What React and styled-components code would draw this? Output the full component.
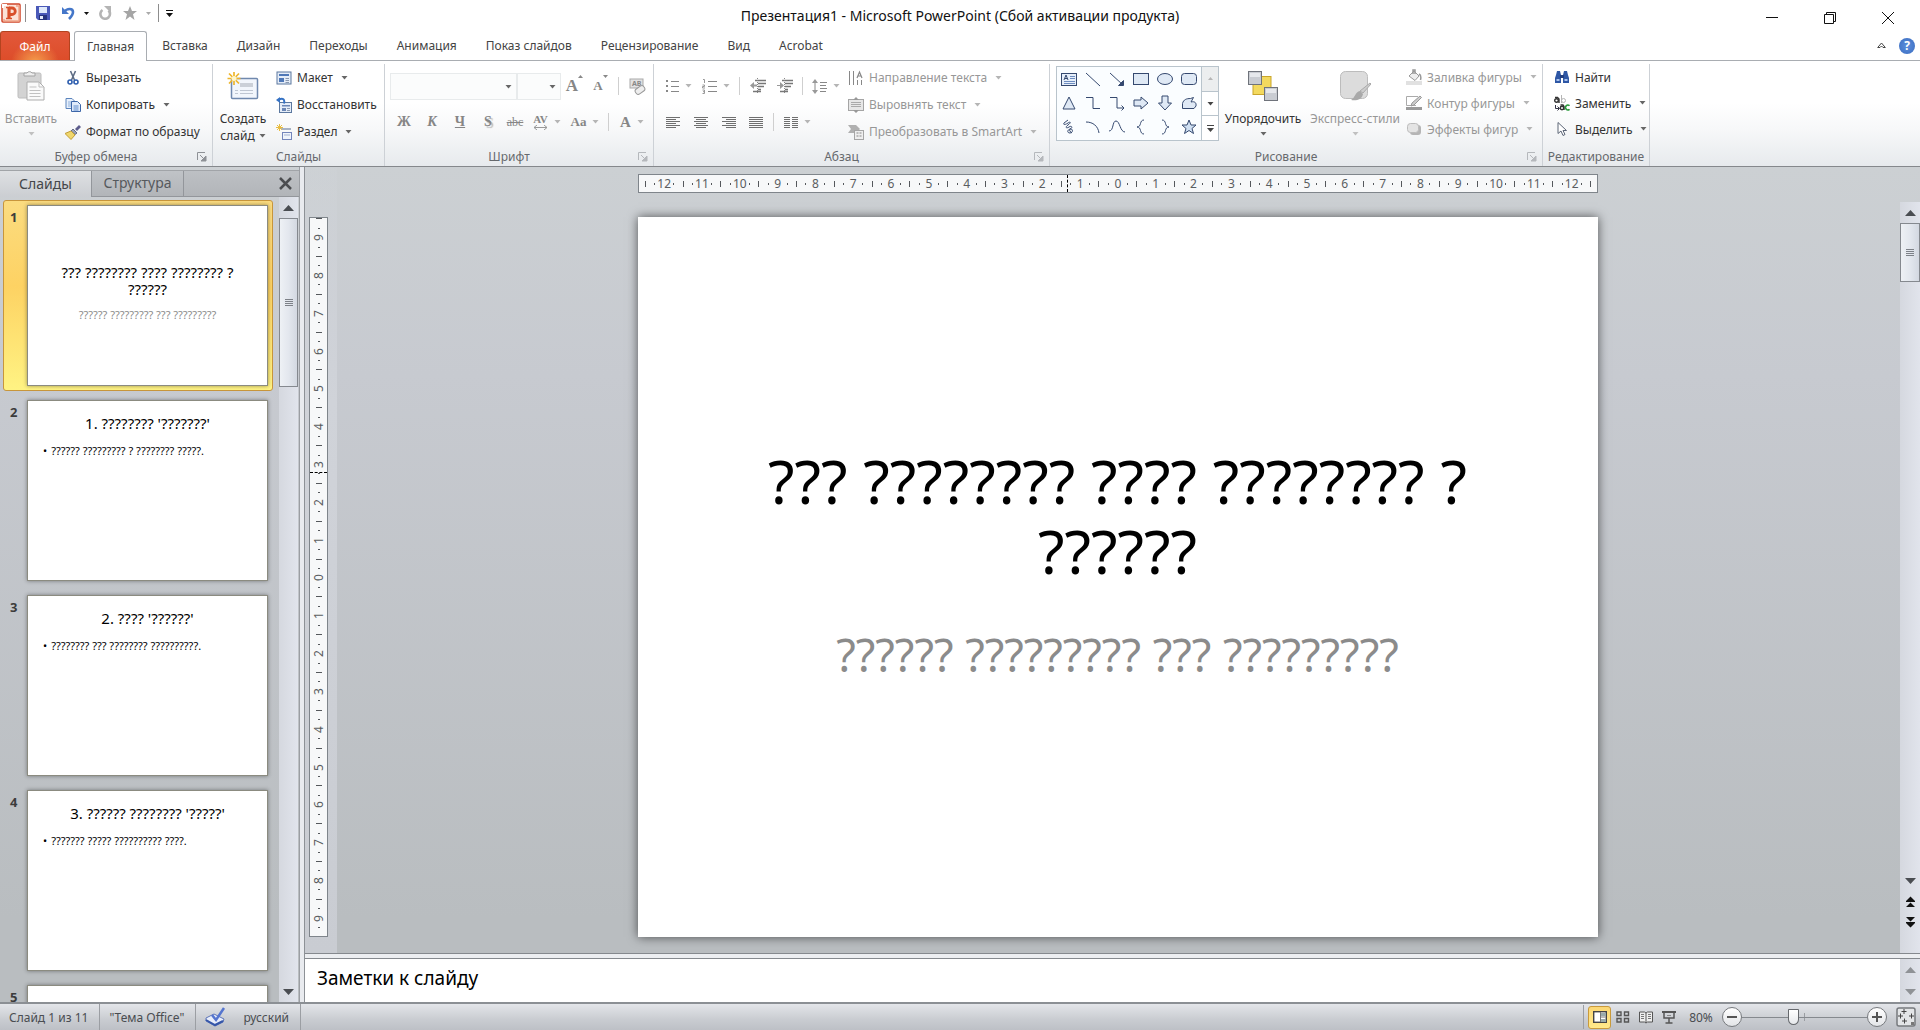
import { useState } from "react";
import styled, { createGlobalStyle, css } from "styled-components";

const GlobalStyle = createGlobalStyle`
  * {
    box-sizing: border-box;
  }
  body {
    margin: 0;
    overflow: hidden;
    font-family: "Noto Sans", "Liberation Sans", sans-serif;
    font-size: 12px;
    color: #333;
    background: #fff;
  }
  button, input, select, textarea {
    font: inherit;
    color: inherit;
  }
  button {
    border: 0;
    padding: 0;
    background: none;
    cursor: pointer;
  }
  button:disabled {
    color: #979797;
    cursor: default;
  }
  svg {
    display: block;
    flex: none;
  }
`;

const Svg = ({ w = 16, h = w, box, children }) => (
  <svg
    width={w}
    height={h}
    viewBox={box || `0 0 ${w} ${h}`}
    fill="none"
    aria-hidden="true"
  >
    {children}
  </svg>
);

const Caret = ({ color = "#666" }) => (
  <Svg w={7} h={4}>
    <path d="M.5 0h6L3.500 3.500z" fill={color} />
  </Svg>
);

const ArrowUp = ({ color = "#4a4d52" }) => (
  <Svg w={11} h={6}>
    <path d="M0 6h11L5.500 0z" fill={color} />
  </Svg>
);

const ArrowDown = ({ color = "#4a4d52" }) => (
  <Svg w={11} h={6}>
    <path d="M0 0h11L5.500 6z" fill={color} />
  </Svg>
);

/* ---------- icons ---------- */

const LogoIcon = () => (
  <Svg w={20}>
    <rect x="1" y="1" width="18" height="18" rx="1" fill="#fbe3d8" stroke="#d0452a" strokeWidth="1.500" />
    <path d="M2 5V2h4" stroke="#fff" strokeWidth="2" />
    <path d="M15 3h3v15H3v-2" stroke="#f0a488" strokeWidth="1.500" />
    <path d="M8 5h3a3 3 0 0 1 0 6.500H9" stroke="#d8502b" strokeWidth="2.800" />
    <path d="M8 4v12" stroke="#d8502b" strokeWidth="3.200" />
    <path d="M5 4.500h4M5 15.500h6" stroke="#d8502b" strokeWidth="1.500" />
  </Svg>
);

const SaveIcon = () => (
  <Svg w={14}>
    <path d="M0 0h14v14H2l-2-2z" fill="#4a59b8" />
    <rect x="3" y="1" width="8" height="6" fill="#dfe9fa" />
    <rect x="3" y="9" width="8" height="5" fill="#26337c" />
    <rect x="4" y="10" width="3" height="3" fill="#e6ebfa" />
  </Svg>
);

const UndoIcon = () => (
  <Svg w={14}>
    <path d="M3 6c3-4 9-4 9 0 0 3-2 5-4 7" stroke="#4577c9" strokeWidth="2.600" />
    <path d="M1 1v7h7z" fill="#4577c9" />
  </Svg>
);

const RedoIcon = () => (
  <Svg w={14}>
    <path d="M4.500 4a4.800 4.800 0 1 0 6 .5" stroke="#b4b4b4" strokeWidth="2.600" />
    <path d="M6 0h7v7z" fill="#b4b4b4" />
  </Svg>
);

const StarIcon = () => (
  <Svg w={14}>
    <path d="M7 0l2 5h5l-4 3.300L11.500 14 7 10.500 2.500 14 4 8.300 0 5h5z" fill="#a5a5a5" />
  </Svg>
);

const PasteIcon = () => (
  <Svg w={28} h={31}>
    <rect x="1" y="3" width="23" height="25" rx="1.500" fill="#d3d3d3" stroke="#bdbdbd" />
    <path d="M7 6V3h3a3 3 0 0 1 5 0h3v3z" fill="#eee" stroke="#a3a3a3" />
    <path d="M10 12h12l5 5v13H10z" fill="#fafafa" stroke="#adadad" />
    <path d="M22 12v5h5M12.500 17h7M12.500 20.500h11M12.500 23.500h11M12.500 26.500h11" stroke="#c1c1c1" />
  </Svg>
);

const CutIcon = () => (
  <Svg>
    <path d="M5.500 1l4 9M10.500 1l-4 9" stroke="#5d6c84" strokeWidth="1.600" />
    <circle cx="5" cy="12" r="2" stroke="#2f5faf" strokeWidth="1.600" />
    <circle cx="11" cy="12" r="2" stroke="#2f5faf" strokeWidth="1.600" />
  </Svg>
);

const CopyIcon = () => (
  <Svg>
    <path d="M1 1.500h6l3 3v7H1z" fill="#e8f0fb" stroke="#5b84bd" />
    <path d="M3 5h4M3 7h4M3 9h4" stroke="#8eb0dc" />
    <path d="M6.500 4.500h6l3 3v7h-9z" fill="#dfeafa" stroke="#3c66a8" />
    <path d="M8.500 9h5M8.500 11h5M8.500 13h5" stroke="#5c8acb" />
  </Svg>
);

const BrushIcon = () => (
  <Svg>
    <path d="M10 5l4-4 2 2-4 4z" fill="#5c5c8c" />
    <path d="M8 5l4 4-2 1.500L6 7z" fill="#9ba3b5" stroke="#666d84" />
    <path d="M6 7l4 4-4 4.500L0 9.500z" fill="#f0d76c" stroke="#c09c35" />
  </Svg>
);

const NewSlideIcon = () => (
  <Svg w={32} h={31}>
    <rect x="4.500" y="8.500" width="26" height="20" rx="1" fill="#f2f6fc" stroke="#7089ae" strokeWidth="1.500" />
    <path d="M13 13h13v4H13z" fill="#cbd0d8" />
    <path d="M8 20.500h3M13 20.500h13M8 23.500h3M13 23.500h13" stroke="#bfc6d2" />
    <path d="M7 2v13M.5 8.500h13M2 3.500l10 10M12 3.500l-10 10" stroke="#eeb62c" strokeWidth="1.700" />
    <circle cx="7" cy="8.500" r="2.500" fill="#fff6c9" />
  </Svg>
);

const LayoutIcon = () => (
  <Svg>
    <rect x="1" y="2" width="14" height="12" fill="#e5edf8" stroke="#5c789f" />
    <path d="M3 4h10v2H3zM3 8h5v4H3z" fill="#5079b8" />
    <path d="M9.500 8.500H13M9.500 10.500H13M9.500 12.500H13" stroke="#8a99b0" />
  </Svg>
);

const ResetIcon = () => (
  <Svg>
    <rect x="3.500" y="5.500" width="12" height="10" fill="#e5edf8" stroke="#5c789f" />
    <path d="M6 8h8v1.500H6zM6 11h4v3H6z" fill="#6b86b5" />
    <path d="M11 11.500h3M11 13.500h3" stroke="#8a99b0" />
    <path d="M3 2.500c4-2 6 0 5 4" stroke="#3572c4" strokeWidth="2" />
    <path d="M0 3l4-3v6z" fill="#3572c4" />
  </Svg>
);

const SectionIcon = () => (
  <Svg>
    <path d="M5 4h10v2H5z" fill="#a8b3c4" />
    <rect x="6.500" y="8.500" width="9" height="7" fill="#eef3fb" stroke="#7385bb" />
    <path d="M8 11h6" stroke="#a3b1d0" />
    <path d="M3.500 0v7M0 3.500h7M1 1l5 5M6 1L1 6" stroke="#e9bc3f" />
  </Svg>
);

const EraserIcon = () => (
  <Svg w={17}>
    <rect x="1" y="1" width="13" height="9" fill="#e2e2e2" stroke="#a9a9a9" />
    <text x="3" y="8" fontSize="7" fontWeight="700" fill="#888">AB</text>
    <rect x="6" y="9" width="10" height="6" rx="2.500" transform="rotate(-35 11 12)" fill="#eee" stroke="#999" />
  </Svg>
);

const BulletsIcon = () => (
  <Svg w={14}>
    <path d="M1 2h2M1 7h2M1 12h2" stroke="#888" strokeWidth="2" />
    <path d="M6 2.500h8M6 7.500h8M6 12.500h8" stroke="#888" />
  </Svg>
);

const NumbersIcon = () => (
  <Svg w={15}>
    <path d="M1 .5h1.500V4M.5 6h2v1.500h-2V9H3M.5 11h2v3.500h-2M1 12.700h1" stroke="#999" />
    <path d="M6 2.500h9M6 7.500h9M6 12.500h9" stroke="#888" />
  </Svg>
);

const IndentIcon = ({ right }) => (
  <Svg w={16}>
    <path d="M5 2.500h11M8 5.500h8M8 8.500h6M8 11.500h3M3 13.500h8" stroke="#777" strokeWidth="1.500" />
    <path d={right ? "M0 7h3V4l4 3.500L3 11V8H0z" : "M0 7.500L4 4v2.500h3v2H4V11z"} fill="#999" />
    <path d="M7.500 0v16" stroke="#888" strokeDasharray="1 1" />
  </Svg>
);

const SpacingIcon = () => (
  <Svg w={15}>
    <path d="M3 2v11" stroke="#888" />
    <path d="M0 4l3-4 3 4zM0 11l3 4 3-4z" fill="#999" />
    <path d="M8 3.500h7M8 6.500h6M8 9.500h7M8 12.500h6" stroke="#888" />
  </Svg>
);

const alignPaths = {
  left: "M0 .5h14M0 2.500h10M0 4.500h14M0 6.500h10M0 8.500h14M0 10.500h10",
  center: "M0 .5h14M2 2.500h10M0 4.500h14M2 6.500h10M0 8.500h14M2 10.500h10",
  right: "M0 .5h14M4 2.500h10M0 4.500h14M4 6.500h10M0 8.500h14M4 10.500h10",
  justify: "M0 .5h14M0 2.500h14M0 4.500h14M0 6.500h14M0 8.500h14M0 10.500h14",
  columns:
    "M0 .5h6M0 2.500h6M0 4.500h6M0 6.500h6M0 8.500h6M0 10.500h6M8 .5h6M8 2.500h6M8 4.500h6M8 6.500h6M8 8.500h6M8 10.500h6",
};

const AlignIcon = ({ type }) => (
  <Svg w={14} h={11}>
    <path d={alignPaths[type]} stroke="#6f6f6f" />
  </Svg>
);

const DirectionIcon = () => (
  <Svg>
    <path d="M1.500 1v14M5.500 1v14M9.500 10v5M13.500 10v5" stroke="#888" />
    <path d="M9 8l2.500-6L14 8M10 6h3" stroke="#888" strokeWidth="1.200" />
  </Svg>
);

const AlignTextIcon = () => (
  <Svg>
    <rect x=".5" y="2.500" width="15" height="11" fill="#e7e7e7" stroke="#a5a5a5" />
    <path d="M3 5.500h10M3 7.500h10M3 9.500h10" stroke="#aaa" />
    <path d="M8 0l3 3H5zM8 16l3-3H5z" fill="#999" />
  </Svg>
);

const SmartArtIcon = () => (
  <Svg>
    <path d="M0 1h8l4 4-4 4H0l3-4z" fill="#b0b0b0" />
    <rect x="6.500" y="6.500" width="9" height="9" fill="#eee" stroke="#a5a5a5" />
    <path d="M8.500 9h2M11.500 9h2M8.500 12h2M11.500 12h2" stroke="#aaa" strokeWidth="1.500" />
  </Svg>
);

const ArrangeIcon = () => (
  <Svg w={32} h={31}>
    <rect x="6" y="6.500" width="18" height="18" fill="#f3d95e" stroke="#c9a52b" />
    <rect x="1.500" y="1.500" width="13" height="13" fill="#c9ccd2" stroke="#6f737b" />
    <path d="M3 3h10v4H3z" fill="#e6e8ec" />
    <rect x="17.500" y="17.500" width="13" height="13" fill="#c9ccd2" stroke="#6f737b" />
    <path d="M19 19h10v4H19z" fill="#e6e8ec" />
  </Svg>
);

const StylesIcon = () => (
  <Svg w={32} h={31}>
    <rect x="1.500" y="1.500" width="27" height="27" rx="5" fill="#dcdcdc" stroke="#bcbcbc" />
    <path d="M31 13l1 1-8 9-3-2z" fill="#ccc" stroke="#aaa" />
    <path d="M21 21l3 3c-1 6-7 7-12 6 4-2 4-8 9-9z" fill="#a9a9a9" />
  </Svg>
);

const FillIcon = () => (
  <Svg>
    <path d="M0 12h16v4H0z" fill="#e1e1e1" />
    <path d="M3 7l5-5 5 5-4 4.500z" fill="#eee" stroke="#999" />
    <path d="M7 5V1h2v4M13 5c2 1 2 4 1.500 6" stroke="#999" strokeWidth="1.500" />
  </Svg>
);

const OutlineIcon = () => (
  <Svg>
    <path d="M0 12h16v3H0z" fill="#9a9a9a" />
    <path d="M12 1.500H.5v9H10" stroke="#aaa" />
    <path d="M14 1l1.500 1.500L8 10l-3 1 1-3z" fill="#ccc" stroke="#999" />
  </Svg>
);

const EffectsIcon = () => (
  <Svg>
    <rect x="4" y="4" width="11" height="10" rx="3" fill="#b5b5b5" />
    <rect x="1.500" y="2.500" width="11" height="9" rx="3" fill="#e4e4e4" stroke="#bcbcbc" />
  </Svg>
);

const FindIcon = () => (
  <Svg>
    <path d="M2 6l1-4h3l1 4v8H1V9zM9 6l1-4h3l1 4 1 3v5H9z" fill="#2e57a5" />
    <path d="M6 6h4v3H6z" fill="#223f80" />
    <path d="M2.500 10h3v2h-3zM10.500 10h3v2h-3z" fill="#aac3ee" />
  </Svg>
);

const ReplaceIcon = () => (
  <Svg>
    <circle cx="2.500" cy="5.500" r="1.800" stroke="#333" strokeWidth="1.400" />
    <path d="M1 2.500h2.500L5 4v4" stroke="#333" strokeWidth="1.400" />
    <path d="M7.500 0v8" stroke="#b5b5b5" />
    <circle cx="9.500" cy="5.500" r="2" stroke="#b5b5b5" />
    <path d="M1.500 10v3.500H5M3.500 11.500l2 2-2 2" stroke="#334" />
    <circle cx="8" cy="13" r="1.700" stroke="#333" strokeWidth="1.400" />
    <path d="M6.500 10h2.500l1 1.500V15" stroke="#333" strokeWidth="1.400" />
    <path d="M15.500 10.700a2.400 2.400 0 1 0 0 3.600" stroke="#2a9a3a" strokeWidth="1.600" />
  </Svg>
);

const SelectIcon = () => (
  <Svg>
    <path d="M4 1.500v11l3-2.500 2 4.500 2-1-2-4h3.500z" fill="#fff" stroke="#5d6677" />
  </Svg>
);

const LauncherIcon = ({ color }) => (
  <Svg w={10}>
    <path d="M.5 8V.5H8" stroke={color} />
    <path d="M3 3l4 4M9 4v5H4z" stroke={color} fill={color} />
  </Svg>
);

const shapeIcons = [
  {
    name: "Надпись",
    draw: (
      <>
        <rect x=".5" y="2.500" width="15" height="12" fill="#e6effa" />
        <path d="M9 5.500h5M9 7.500h5M3 10.500h11M3 12.500h11" stroke="#6d8cc0" />
        <path d="M3 9l2-5 2 5M4 7.500h2.500" />
      </>
    ),
  },
  { name: "Линия", draw: <path d="M1 2l14 13" /> },
  { name: "Стрелка", draw: <path d="M1 2l13 12M14.500 9.500v5h-5z" fill="#35496f" /> },
  { name: "Прямоугольник", draw: <rect x=".5" y="2.500" width="15" height="11" fill="#dfe9f5" /> },
  { name: "Овал", draw: <ellipse cx="8" cy="8" rx="7.500" ry="5.500" fill="#dfe9f5" /> },
  {
    name: "Скругленный прямоугольник",
    draw: <rect x=".5" y="2.500" width="15" height="11" rx="3" fill="#dfe9f5" />,
  },
  { name: "Треугольник", draw: <path d="M8 2l6 12H2z" fill="#dfe9f5" /> },
  { name: "Соединитель", draw: <path d="M1 2.500h7v11h7" /> },
  { name: "Соединитель со стрелкой", draw: <path d="M1 2.500h7v10.500h7M12.500 10.500L15 13l-2.500 2.500" /> },
  { name: "Стрелка вправо", draw: <path d="M1 5h7V2l7 6-7 6v-3H1z" fill="#dfe9f5" /> },
  { name: "Стрелка вниз", draw: <path d="M5 1v7H1.500L8 15l6.500-7H11V1z" fill="#dfe9f5" /> },
  {
    name: "Полилиния",
    draw: <path d="M1.500 13.500v-5c1-4 4-5 8-5l3-1-2.500 4.500c4-1 5.500 1 5 4l-2 2.500z" fill="#dfe9f5" />,
  },
  { name: "Рисованная кривая", draw: <path d="M7 1L3 4c-1 2 1 2 4 0s3 0 0 2-2 4 1 2 4 1 1 2-3 4 0 4 3-4 1-4-2 2 1 4" /> },
  { name: "Дуга", draw: <path d="M1 3c7 0 12 4 13 11" /> },
  { name: "Кривая", draw: <path d="M0 12C5 12 3 2 7 2s4 11 9 11" /> },
  { name: "Левая скобка", draw: <path d="M11 1C6 1 9 8 4 8c5 0 2 7 7 7" /> },
  { name: "Правая скобка", draw: <path d="M5 1c5 0 2 7 7 7-5 0-2 7-7 7" /> },
  {
    name: "Звезда",
    draw: <path d="M8 1l2 5h5l-4 3.500 1.500 5L8 11.500l-4.500 3L5 9.500 1 6h5z" fill="#cfe0f3" />,
  },
];

/* ---------- ribbon ---------- */

const LabelButton = ({ icon, children, caret, disabled }) => (
  <SmallButton type="button" disabled={disabled}>
    {icon}
    <span>{children}</span>
    {caret && <Caret color={disabled ? "#b5b5b5" : "#666"} />}
  </SmallButton>
);

const ToolButton = ({ label, width, caret, children }) => (
  <Tool type="button" disabled aria-label={label} title={label} $width={width}>
    {children}
    {caret && <Caret color="#b5b5b5" />}
  </Tool>
);

const RibbonGroup = ({ title, width, launcher, children }) => (
  <Group $width={width}>
    <GroupBody>{children}</GroupBody>
    <GroupFooter>
      <GroupTitle>{title}</GroupTitle>
      {launcher && (
        <Launcher type="button" aria-label={title}>
          <LauncherIcon color={launcher} />
        </Launcher>
      )}
    </GroupFooter>
  </Group>
);

const Ribbon = () => (
  <RibbonBar>
    <RibbonGroup title="Буфер обмена" width={213} launcher="#8e9196">
      <BigButton type="button" disabled $width={62}>
        <PasteIcon />
        <span>Вставить</span>
        <Caret color="#c0c0c0" />
      </BigButton>
      <ButtonColumn>
        <LabelButton icon={<CutIcon />}>Вырезать</LabelButton>
        <LabelButton icon={<CopyIcon />} caret>
          Копировать
        </LabelButton>
        <LabelButton icon={<BrushIcon />}>Формат по образцу</LabelButton>
      </ButtonColumn>
    </RibbonGroup>

    <RibbonGroup title="Слайды" width={172}>
      <BigButton type="button" $width={60}>
        <NewSlideIcon />
        <span>Создать</span>
        <CaretLine>
          слайд <Caret />
        </CaretLine>
      </BigButton>
      <ButtonColumn>
        <LabelButton icon={<LayoutIcon />} caret>
          Макет
        </LabelButton>
        <LabelButton icon={<ResetIcon />}>Восстановить</LabelButton>
        <LabelButton icon={<SectionIcon />} caret>
          Раздел
        </LabelButton>
      </ButtonColumn>
    </RibbonGroup>

    <RibbonGroup title="Шрифт" width={269} launcher="#b5b8bc">
      <ToolRows>
        <ToolRow>
          <Combo $width={127}>
            <select aria-label="Шрифт" disabled />
            <Caret />
          </Combo>
          <Combo $width={44}>
            <select aria-label="Размер шрифта" disabled />
            <Caret />
          </Combo>
          <ToolButton label="Увеличить размер" width={27}>
            <Letter $size={17}>A</Letter>
            <Mark>
              <Svg w={5} h={3}>
                <path d="M0 3h5L2.500 0z" fill="#888" />
              </Svg>
            </Mark>
          </ToolButton>
          <ToolButton label="Уменьшить размер" width={25}>
            <Letter $size={13}>A</Letter>
            <Mark>
              <Svg w={5} h={3}>
                <path d="M0 0h5L2.500 3z" fill="#888" />
              </Svg>
            </Mark>
          </ToolButton>
          <Separator $width={11} />
          <ToolButton label="Очистить формат" width={26}>
            <EraserIcon />
          </ToolButton>
        </ToolRow>
        <ToolRow>
          <ToolButton label="Полужирный" width={28}>
            <Letter>Ж</Letter>
          </ToolButton>
          <ToolButton label="Курсив" width={28}>
            <Letter $kind="italic">К</Letter>
          </ToolButton>
          <ToolButton label="Подчеркнутый" width={28}>
            <Letter $kind="underline">Ч</Letter>
          </ToolButton>
          <ToolButton label="Тень" width={28}>
            <Letter $kind="shadow">S</Letter>
          </ToolButton>
          <ToolButton label="Зачеркнутый" width={26}>
            <Letter $kind="strike" $size={12}>
              abc
            </Letter>
          </ToolButton>
          <ToolButton label="Интервал" width={38} caret>
            <Kerning>
              <Letter $size={11}>AV</Letter>
              <Svg w={15} h={5}>
                <path d="M1 2.500h13M4 0L1 2.500 4 5M11 0l3 2.500L11 5" stroke="#999" />
              </Svg>
            </Kerning>
          </ToolButton>
          <ToolButton label="Регистр" width={38} caret>
            <Letter $size={13}>Aa</Letter>
          </ToolButton>
          <Separator $width={8} />
          <ToolButton label="Цвет текста" width={38} caret>
            <Letter $size={15}>A</Letter>
          </ToolButton>
        </ToolRow>
      </ToolRows>
    </RibbonGroup>

    <RibbonGroup title="Абзац" width={396} launcher="#b5b8bc">
      <ToolRows>
        <ToolRow>
          <ToolButton label="Маркеры" width={38} caret>
            <BulletsIcon />
          </ToolButton>
          <ToolButton label="Нумерация" width={38} caret>
            <NumbersIcon />
          </ToolButton>
          <Separator $width={8} />
          <ToolButton label="Уменьшить отступ" width={27}>
            <IndentIcon />
          </ToolButton>
          <ToolButton label="Увеличить отступ" width={27}>
            <IndentIcon right />
          </ToolButton>
          <Separator $width={8} />
          <ToolButton label="Междустрочный интервал" width={38} caret>
            <SpacingIcon />
          </ToolButton>
        </ToolRow>
        <ToolRow>
          <ToolButton label="По левому краю" width={28}>
            <AlignIcon type="left" />
          </ToolButton>
          <ToolButton label="По центру" width={28}>
            <AlignIcon type="center" />
          </ToolButton>
          <ToolButton label="По правому краю" width={28}>
            <AlignIcon type="right" />
          </ToolButton>
          <ToolButton label="По ширине" width={26}>
            <AlignIcon type="justify" />
          </ToolButton>
          <Separator $width={8} />
          <ToolButton label="Колонки" width={38} caret>
            <AlignIcon type="columns" />
          </ToolButton>
        </ToolRow>
      </ToolRows>
      <ButtonColumn>
        <LabelButton icon={<DirectionIcon />} caret disabled>
          Направление текста
        </LabelButton>
        <LabelButton icon={<AlignTextIcon />} caret disabled>
          Выровнять текст
        </LabelButton>
        <LabelButton icon={<SmartArtIcon />} caret disabled>
          Преобразовать в SmartArt
        </LabelButton>
      </ButtonColumn>
    </RibbonGroup>

    <RibbonGroup title="Рисование" width={493} launcher="#b5b8bc">
      <Gallery>
        <GalleryGrid>
          {shapeIcons.map((shape) => (
            <GalleryCell type="button" key={shape.name} aria-label={shape.name}>
              <Svg>
                <g stroke="#35496f">{shape.draw}</g>
              </Svg>
            </GalleryCell>
          ))}
        </GalleryGrid>
        <GalleryScroll>
          <button type="button" aria-label="Вверх" disabled>
            <Svg w={5} h={3}>
              <path d="M0 3h5L2.500 0z" fill="#b5b5b5" />
            </Svg>
          </button>
          <button type="button" aria-label="Вниз">
            <Caret color="#444" />
          </button>
          <button type="button" aria-label="Дополнительно">
            <Svg w={7} h={7}>
              <path d="M0 0h7v1H0zM0 3h7L3.500 7z" fill="#444" />
            </Svg>
          </button>
        </GalleryScroll>
      </Gallery>
      <BigButton type="button" $width={88}>
        <ArrangeIcon />
        <span>Упорядочить</span>
        <Caret />
      </BigButton>
      <BigButton type="button" disabled $width={96}>
        <StylesIcon />
        <span>Экспресс-стили</span>
        <Caret color="#c0c0c0" />
      </BigButton>
      <ButtonColumn $tight>
        <LabelButton icon={<FillIcon />} caret disabled>
          Заливка фигуры
        </LabelButton>
        <LabelButton icon={<OutlineIcon />} caret disabled>
          Контур фигуры
        </LabelButton>
        <LabelButton icon={<EffectsIcon />} caret disabled>
          Эффекты фигур
        </LabelButton>
      </ButtonColumn>
    </RibbonGroup>

    <RibbonGroup title="Редактирование" width={107}>
      <ButtonColumn $tight $inset>
        <LabelButton icon={<FindIcon />}>Найти</LabelButton>
        <LabelButton icon={<ReplaceIcon />} caret>
          Заменить
        </LabelButton>
        <LabelButton icon={<SelectIcon />} caret>
          Выделить
        </LabelButton>
      </ButtonColumn>
    </RibbonGroup>
  </RibbonBar>
);

/* ---------- slides ---------- */

const slides = [
  { title: "??? ???????? ???? ???????? ? ??????", subtitle: "?????? ????????? ??? ?????????" },
  { title: "1. ???????? '???????'", text: "?????? ????????? ? ???????? ?????." },
  { title: "2. ???? '??????'", text: "???????? ??? ???????? ??????????." },
  { title: "3. ?????? ???????? '?????'", text: "??????? ????? ?????????? ????." },
  { title: "", text: "" },
];

const SlidePanel = () => {
  const [selected, setSelected] = useState(0);

  return (
    <Panel>
      <PanelTabs>
        <PanelTab type="button" $active>
          Слайды
        </PanelTab>
        <PanelTab type="button">Структура</PanelTab>
        <PanelClose type="button" aria-label="Закрыть">
          <Svg w={13}>
            <path d="M1 1l11 11M12 1L1 12" stroke="#4b4d50" strokeWidth="2.500" />
          </Svg>
        </PanelClose>
      </PanelTabs>
      <PanelBody>
        <Thumbs>
          {slides.map((slide, index) => (
            <ThumbItem
              type="button"
              key={index}
              $selected={index === selected}
              onClick={() => setSelected(index)}
            >
              <ThumbNumber>{index + 1}</ThumbNumber>
              <Thumb $cover={Boolean(slide.subtitle)}>
                <strong>{slide.title}</strong>
                {slide.subtitle && <em>{slide.subtitle}</em>}
                {slide.text && (
                  <ThumbBullet>
                    <i>•</i>
                    {slide.text}
                  </ThumbBullet>
                )}
              </Thumb>
            </ThumbItem>
          ))}
        </Thumbs>
        <ScrollBar $width={19}>
          <ScrollButton type="button" aria-label="Вверх">
            <ArrowUp />
          </ScrollButton>
          <ScrollThumb $height={169}>
            <Grip />
          </ScrollThumb>
          <ScrollSpace />
          <ScrollButton type="button" aria-label="Вниз">
            <ArrowDown />
          </ScrollButton>
        </ScrollBar>
      </PanelBody>
    </Panel>
  );
};

const rulerMarks = (limit) => {
  const marks = [];
  for (let n = -limit; n <= limit; n++) {
    marks.push("tick", "dot", Math.abs(n), "dot");
  }
  marks.push("tick");
  return marks;
};

const Ruler = ({ vertical, limit }) => (
  <RulerBar $vertical={vertical}>
    <RulerScale $vertical={vertical}>
      {rulerMarks(limit).map((mark, index) => (
        <RulerCell key={index} $kind={mark} $vertical={vertical}>
          {typeof mark === "number" ? <b>{mark}</b> : <i />}
        </RulerCell>
      ))}
    </RulerScale>
    <RulerCursor $vertical={vertical} />
  </RulerBar>
);

const DoubleArrow = ({ down }) => (
  <Svg w={9} h={11}>
    <path
      d={down ? "M0 0h9L4.500 4.500zM0 6h9l-4.500 4.500zM0 5h9v1H0z" : "M0 5h9L4.500 .5zM0 11h9L4.500 6.500zM0 5h9v1H0z"}
      fill="#111"
    />
  </Svg>
);

const Editor = () => (
  <EditorArea>
    <Stage>
      <RulerColumn>
        <Ruler vertical limit={9} />
      </RulerColumn>
      <Canvas>
        <Ruler limit={12} />
        <Sheet>
          <h1>{slides[0].title}</h1>
          <p>{slides[0].subtitle}</p>
        </Sheet>
      </Canvas>
      <StageScroll>
        <ScrollBar $width={20}>
          <ScrollButton type="button" aria-label="Вверх">
            <ArrowUp />
          </ScrollButton>
          <ScrollThumb $height={59}>
            <Grip />
          </ScrollThumb>
          <ScrollSpace />
          <ScrollButton type="button" aria-label="Вниз">
            <ArrowDown />
          </ScrollButton>
          <ScrollButton type="button" aria-label="Предыдущий слайд">
            <DoubleArrow />
          </ScrollButton>
          <ScrollButton type="button" aria-label="Следующий слайд">
            <DoubleArrow down />
          </ScrollButton>
          <ScrollEnd />
        </ScrollBar>
      </StageScroll>
    </Stage>
    <Notes>
      <textarea aria-label="Заметки" defaultValue="Заметки к слайду" />
      <ScrollBar $width={20}>
        <ScrollButton type="button" aria-label="Вверх">
          <ArrowUp color="#8f9296" />
        </ScrollButton>
        <ScrollSpace />
        <ScrollButton type="button" aria-label="Вниз">
          <ArrowDown color="#8f9296" />
        </ScrollButton>
      </ScrollBar>
    </Notes>
  </EditorArea>
);

const StatusBar = () => {
  const [zoom, setZoom] = useState(40);

  return (
    <Status>
      <StatusItem>Слайд 1 из 11</StatusItem>
      <StatusItem>"Тема Office"</StatusItem>
      <StatusItem>
        <Svg w={21} h={20}>
          <path d="M1 11l8-4 10 5-1 3-8 4-9-5z" fill="#e9eefa" stroke="#5c74b8" />
          <path d="M1 13l9 5 8-4" stroke="#3556a8" strokeWidth="2" />
          <path d="M7 8l4 5L19 1" stroke="#5575cf" strokeWidth="2.500" />
        </Svg>
        <Language type="button">русский</Language>
      </StatusItem>
      <StatusSpace />
      <StatusDivider />
      <ViewButton type="button" aria-label="Обычный" $active>
        <Svg w={14} h={12}>
          <rect x=".7" y=".7" width="12.600" height="10.600" fill="#fff" stroke="#444" strokeWidth="1.400" />
          <path d="M7.500 1v10M7.500 6h5" stroke="#777" />
          <path d="M8 2h5v3H8zM8 8h5v3H8z" fill="#9aa" />
        </Svg>
      </ViewButton>
      <ViewButton type="button" aria-label="Сортировщик слайдов">
        <Svg w={14} h={12}>
          <path d="M1 1h4v3.500H1zM8.500 1h4v3.500h-4zM1 7.500h4V11H1zM8.500 7.500h4V11h-4z" stroke="#555" strokeWidth="1.400" />
        </Svg>
      </ViewButton>
      <ViewButton type="button" aria-label="Режим чтения">
        <Svg w={14} h={13}>
          <path d="M.5 1h5L7 2l1.500-1h5v10h-5L7 12l-1.500-1h-5zM7 2v10" stroke="#555" fill="#eee" />
          <path d="M2 3.500h3M2 5.500h3M2 7.500h3M9 3.500h3M9 5.500h3M9 7.500h3" stroke="#777" />
        </Svg>
      </ViewButton>
      <ViewButton type="button" aria-label="Показ слайдов">
        <Svg w={14} h={13}>
          <path d="M0 1h14" stroke="#555" strokeWidth="2" />
          <path d="M2 2v5h10V2M7 7v5M3.500 12h7" stroke="#555" strokeWidth="1.500" />
          <path d="M5 4.500h4" stroke="#888" />
        </Svg>
      </ViewButton>
      <ZoomValue>80%</ZoomValue>
      <RoundButton type="button" aria-label="Уменьшить">
        <Svg w={10}>
          <path d="M0 5h10" stroke="#555" strokeWidth="2" />
        </Svg>
      </RoundButton>
      <ZoomSlider
        type="range"
        aria-label="Масштаб"
        value={zoom}
        onChange={(e) => setZoom(e.target.value)}
      />
      <RoundButton type="button" aria-label="Увеличить">
        <Svg w={10}>
          <path d="M0 5h10M5 0v10" stroke="#555" strokeWidth="2" />
        </Svg>
      </RoundButton>
      <FitButton type="button" aria-label="По размеру окна">
        <Svg w={20}>
          <rect x="1" y="1" width="18" height="18" rx="2" fill="#e3e5e7" stroke="#777a7e" strokeWidth="1.500" />
          <path d="M8 2v5M5.500 4.500h5M13 9h5M15.500 6.500v5M2 9h5M4.500 6.500v5M6 14h5M8.500 11.500v5" stroke="#444" />
          <path d="M15 15h3v3h-3z" fill="#777" />
        </Svg>
      </FitButton>
    </Status>
  );
};

const tabs = [
  "Вставка",
  "Дизайн",
  "Переходы",
  "Анимация",
  "Показ слайдов",
  "Рецензирование",
  "Вид",
  "Acrobat",
];

const App = () => (
  <Window>
    <GlobalStyle />
    <TitleBar>
      <QuickAccess>
        <LogoIcon />
        <QuickDivider />
        <QuickButton type="button" aria-label="Сохранить" $width={25}>
          <SaveIcon />
        </QuickButton>
        <QuickButton type="button" aria-label="Отменить" $width={25}>
          <UndoIcon />
        </QuickButton>
        <QuickButton type="button" aria-label="Список отмены" $width={12}>
          <Svg w={5} h={3}>
            <path d="M0 0h5L2.500 3z" fill="#111" />
          </Svg>
        </QuickButton>
        <QuickButton type="button" aria-label="Повторить" disabled $width={25}>
          <RedoIcon />
        </QuickButton>
        <QuickButton type="button" aria-label="Анимация" disabled $width={25}>
          <StarIcon />
        </QuickButton>
        <QuickButton type="button" aria-label="Список анимации" disabled $width={12}>
          <Svg w={5} h={3}>
            <path d="M0 0h5L2.500 3z" fill="#aaa" />
          </Svg>
        </QuickButton>
        <QuickDivider />
        <QuickButton type="button" aria-label="Настройка панели" $width={12}>
          <Svg w={7} h={7}>
            <path d="M0 0h7v1H0zM0 3h7L3.500 7z" fill="#111" />
          </Svg>
        </QuickButton>
      </QuickAccess>
      <Title>Презентация1 - Microsoft PowerPoint (Сбой активации продукта)</Title>
      <WindowButtons>
        <button type="button" aria-label="Свернуть">
          <Svg w={12}>
            <path d="M0 5.500h12" stroke="#111" />
          </Svg>
        </button>
        <button type="button" aria-label="Развернуть">
          <Svg w={12}>
            <path d="M.5 2.500h9v9h-9zM2.500 2.500v-2h9v9h-2" stroke="#111" />
          </Svg>
        </button>
        <button type="button" aria-label="Закрыть">
          <Svg w={12}>
            <path d="M0 0l12 12M12 0L0 12" stroke="#111" />
          </Svg>
        </button>
      </WindowButtons>
    </TitleBar>
    <TabBar>
      <FileTab type="button">Файл</FileTab>
      <Tab type="button" $active>
        Главная
      </Tab>
      {tabs.map((tab) => (
        <Tab type="button" key={tab}>
          {tab}
        </Tab>
      ))}
      <TabTools>
        <button type="button" aria-label="Свернуть ленту">
          <Svg w={9} h={7}>
            <path d="M.7 5.500L4.500 1l3.800 4.500H6L4.500 4 3 5.500z" stroke="#444" />
          </Svg>
        </button>
        <HelpButton type="button" aria-label="Справка">
          ?
        </HelpButton>
      </TabTools>
    </TabBar>
    <Ribbon />
    <Workspace>
      <SlidePanel />
      <Editor />
    </Workspace>
    <StatusBar />
  </Window>
);

/* ---------- styles ---------- */

const Window = styled.div`
  display: flex;
  flex-direction: column;
  height: 100vh;
`;

const TitleBar = styled.header`
  display: grid;
  grid-template-columns: 1fr auto 1fr;
  height: 31px;
`;

const QuickAccess = styled.div`
  display: flex;
  align-items: center;
  height: 26px;
  padding-left: 1px;
`;

const QuickDivider = styled.span`
  width: 1px;
  height: 18px;
  margin: 0 4px;
  background: #8d8d8d;
`;

const QuickButton = styled.button`
  display: flex;
  align-items: center;
  justify-content: center;
  width: ${(p) => p.$width}px;
`;

const Title = styled.div`
  padding-top: 6px;
  font-size: 14px;
  line-height: 20px;
  color: #111;
`;

const WindowButtons = styled.div`
  display: flex;
  justify-content: flex-end;
  align-items: center;
  height: 36px;
  padding-right: 3px;
  button {
    display: flex;
    justify-content: center;
    width: 58px;
  }
`;

const TabBar = styled.nav`
  display: flex;
  align-items: flex-end;
  height: 30px;
  border-bottom: 1px solid #a9adb2;
`;

const Tab = styled.button`
  height: 29px;
  padding: 0 14px 0 15px;
  color: #444;
  ${(p) =>
    p.$active &&
    css`
      height: 30px;
      margin: 0 0 -1px 4px;
      padding: 0 12px;
      border: 1px solid #a9adb2;
      border-bottom: 0;
      border-radius: 3px 3px 0 0;
      background: #fff;
    `}
`;

const FileTab = styled.button`
  width: 70px;
  height: 29px;
  color: #fff;
  border: 1px solid #b3431f;
  border-bottom: 0;
  border-radius: 3px 3px 0 0;
  background: radial-gradient(ellipse at 50% 110%, #f6a04d, rgba(230, 95, 50, 0) 50%),
    linear-gradient(#e2583a, #dd4d2a);
`;

const TabTools = styled.div`
  display: flex;
  align-items: center;
  gap: 13px;
  height: 29px;
  margin-left: auto;
  padding-right: 5px;
`;

const HelpButton = styled.button`
  width: 16px;
  height: 16px;
  border-radius: 50%;
  line-height: 16px;
  font-weight: 700;
  color: #fff;
  background: radial-gradient(#5c8fdc, #3a6cc0);
`;

const RibbonBar = styled.section`
  display: flex;
  height: 106px;
  padding-top: 3px;
  border-bottom: 1px solid #85888c;
  background: linear-gradient(#fff 40%, #f7f8f9 65%, #e7eaed);
`;

const Group = styled.div`
  display: flex;
  flex: none;
  flex-direction: column;
  width: ${(p) => p.$width}px;
  border-right: 1px solid #cdd1d6;
`;

const GroupBody = styled.div`
  display: flex;
  flex: 1;
`;

const GroupFooter = styled.footer`
  display: flex;
  align-items: center;
  height: 19px;
`;

const GroupTitle = styled.span`
  flex: 1;
  text-align: center;
  color: #66696d;
`;

const Launcher = styled.button`
  display: flex;
  justify-content: center;
  width: 20px;
`;

const BigButton = styled.button`
  display: flex;
  flex: none;
  flex-direction: column;
  align-items: center;
  align-self: flex-start;
  width: ${(p) => p.$width}px;
  padding-top: 6px;
  line-height: 17px;
  white-space: nowrap;
  > svg:first-child {
    margin-bottom: 9px;
  }
  > svg:last-child {
    margin-top: 5px;
  }
`;

const CaretLine = styled.span`
  display: flex;
  align-items: center;
  gap: 4px;
`;

const ButtonColumn = styled.div`
  display: flex;
  flex-direction: column;
  padding: ${(p) => (p.$inset ? "0 0 0 11px" : "0 0 0 3px")};
  button {
    height: ${(p) => (p.$tight ? 26 : 27)}px;
  }
`;

const SmallButton = styled.button`
  display: flex;
  align-items: center;
  gap: 5px;
  white-space: nowrap;
  > svg:last-child {
    margin-left: 3px;
  }
`;

const ToolRows = styled.div`
  display: flex;
  flex-direction: column;
  gap: 10px;
  padding: 9px 0 0 5px;
`;

const ToolRow = styled.div`
  display: flex;
  align-items: center;
  height: 26px;
`;

const Tool = styled.button`
  display: flex;
  align-items: center;
  justify-content: center;
  gap: 6px;
  width: ${(p) => p.$width}px;
  height: 22px;
`;

const Separator = styled.span`
  width: 1px;
  height: 18px;
  margin: 0 ${(p) => Math.floor(p.$width / 2)}px;
  background: #cfcfcf;
`;

const Combo = styled.div`
  position: relative;
  width: ${(p) => p.$width}px;
  height: 27px;
  select {
    width: 100%;
    height: 100%;
    appearance: none;
    border: 1px solid #dfe3e5;
    border-radius: 0;
    background: #fafbfb;
  }
  svg {
    position: absolute;
    right: 5px;
    top: 12px;
  }
`;

const Letter = styled.span`
  font-family: "Liberation Serif", serif;
  font-size: ${(p) => p.$size || 14}px;
  font-weight: 700;
  line-height: 16px;
  color: #868686;
  ${(p) => p.$kind === "italic" && "font-style: italic;"}
  ${(p) => p.$kind === "underline" && "text-decoration: underline;"}
  ${(p) => p.$kind === "strike" && "text-decoration: line-through; font-weight: 400;"}
  ${(p) => p.$kind === "shadow" && "text-shadow: 2px 2px 1px #bbb;"}
`;

const Mark = styled.span`
  align-self: flex-start;
  margin-left: -6px;
`;

const Kerning = styled.span`
  display: flex;
  flex-direction: column;
  align-items: center;
  ${Letter} {
    line-height: 11px;
  }
`;

const Gallery = styled.div`
  display: flex;
  height: 75px;
  margin: 2px 0 0 6px;
`;

const GalleryGrid = styled.div`
  display: grid;
  grid-template-columns: repeat(6, 24px);
  grid-auto-rows: 24px;
  border: 1px solid #b9c4cc;
  border-right: 0;
  background: #fafdff;
`;

const GalleryCell = styled.button`
  display: flex;
  align-items: center;
  justify-content: center;
`;

const GalleryScroll = styled.div`
  display: flex;
  flex-direction: column;
  width: 18px;
  button {
    display: flex;
    flex: 1;
    align-items: center;
    justify-content: center;
    border: 1px solid #b9c4cc;
    background: #fff;
  }
  button + button {
    border-top: 0;
  }
  button:disabled {
    background: #eceeef;
  }
`;

const Workspace = styled.main`
  display: flex;
  flex: 1;
  min-height: 0;
  background: linear-gradient(#ccd0d3, #c7cad0 25%, #b9bdc0 90%);
`;

const Panel = styled.aside`
  display: flex;
  flex: none;
  flex-direction: column;
  width: 305px;
  padding-top: 3px;
  border-right: 1px solid #8d9196;
  box-shadow: inset -4px 0 #e9ebef, inset -5px 0 #9b9ea3;
`;

const PanelTabs = styled.div`
  display: flex;
  height: 27px;
  margin-right: 5px;
  border-top: 1px solid #a1a4a8;
`;

const PanelTab = styled.button`
  width: 92px;
  padding-bottom: 2px;
  font-size: 14px;
  color: #56595d;
  border: solid #93969b;
  border-width: 0 1px 1px 0;
  background: linear-gradient(#c0c3c7, #b2b5b9);
  ${(p) =>
    p.$active &&
    css`
      color: #44474a;
      border-bottom: 0;
      background: linear-gradient(#dee0e3, #cbced2);
    `}
`;

const PanelClose = styled.button`
  display: flex;
  flex: 1;
  align-items: center;
  justify-content: flex-end;
  padding-right: 7px;
  border-bottom: 1px solid #93969b;
  background: linear-gradient(#bdc0c4, #b2b5b9);
`;

const PanelBody = styled.div`
  display: flex;
  flex: 1;
  justify-content: space-between;
  min-height: 0;
  padding-right: 6px;
`;

const Thumbs = styled.div`
  display: flex;
  flex-direction: column;
  gap: 4px;
  padding: 3px 0 0 3px;
  overflow: hidden;
`;

const ThumbItem = styled.button`
  display: flex;
  flex: none;
  width: 270px;
  height: 191px;
  padding: 4px;
  border: 1px solid transparent;
  border-radius: 3px;
  ${(p) =>
    p.$selected &&
    css`
      border-color: #c8963c;
      background: linear-gradient(#fbdc80, #fdd263 45%, #fff383);
    `}
`;

const ThumbNumber = styled.span`
  width: 19px;
  padding-top: 3px;
  font-size: 13px;
  font-weight: 700;
  text-align: left;
  text-indent: 2px;
  color: #3c3c3c;
`;

const Thumb = styled.span`
  display: flex;
  flex-direction: column;
  align-items: center;
  width: 241px;
  height: 181px;
  padding: ${(p) => (p.$cover ? "58px 20px 0" : "14px 0 0 15px")};
  border: 1px solid #8b8b80;
  background: #fff;
  box-shadow: 0 0 4px rgba(0, 0, 0, 0.4);
  color: #000;
  strong {
    font-size: 15px;
    font-weight: 400;
    line-height: 17px;
    ${(p) => !p.$cover && "margin-right: 15px;"}
  }
  em {
    margin-top: 9px;
    font-size: 11px;
    font-style: normal;
    color: #8b8b8b;
    white-space: nowrap;
  }
`;

const ThumbBullet = styled.span`
  display: flex;
  gap: 4px;
  width: 100%;
  margin-top: 11px;
  font-size: 11px;
  line-height: 16px;
  white-space: nowrap;
  i {
    font-style: normal;
  }
`;

const ScrollBar = styled.div`
  display: flex;
  flex: none;
  flex-direction: column;
  width: ${(p) => p.$width}px;
  background: linear-gradient(90deg, #d5d8df, #e1e4ec);
`;

const ScrollButton = styled.button`
  display: flex;
  align-items: center;
  justify-content: center;
  height: 21px;
`;

const ScrollThumb = styled.div`
  display: flex;
  align-items: center;
  justify-content: center;
  height: ${(p) => p.$height}px;
  border: 1px solid #85898f;
  background: linear-gradient(90deg, #eef1f5, #e3e7ee 50%, #d3d8e1);
`;

const Grip = styled.span`
  width: 8px;
  height: 7px;
  background: repeating-linear-gradient(#7d8188 0 1px, transparent 1px 2px);
`;

const ScrollSpace = styled.div`
  flex: 1;
`;

const ScrollEnd = styled.div`
  height: 20px;
`;

const EditorArea = styled.section`
  display: flex;
  flex: 1;
  flex-direction: column;
  min-width: 0;
`;

const Stage = styled.div`
  display: flex;
  flex: 1;
  min-height: 0;
  overflow: hidden;
`;

const RulerColumn = styled.div`
  flex: none;
  width: 32px;
  padding: 50px 0 0 4px;
  background: linear-gradient(rgba(210, 214, 219, 0.2), #d0d3d9 30%, #c9ccd2);
`;

const Canvas = styled.div`
  display: flex;
  flex: 1;
  flex-direction: column;
  align-items: center;
  gap: 24px;
  min-width: 0;
  padding: 7px 2px 0 0;
`;

const RulerBar = styled.div`
  position: relative;
  flex: none;
  overflow: hidden;
  border: 1px solid #7f858b;
  background: #f7f8f9;
  ${(p) =>
    p.$vertical
      ? css`
          width: 19px;
          height: 720px;
          padding: 0 1px;
        `
      : css`
          width: 960px;
          height: 19px;
          padding: 0 2px;
        `}
`;

const RulerScale = styled.div`
  display: flex;
  ${(p) =>
    p.$vertical
      ? css`
          flex-direction: column;
          height: 728px;
          margin-top: -4px;
        `
      : css`
          height: 100%;
        `}
`;

const RulerCell = styled.span`
  display: flex;
  flex: 1 1 0;
  align-items: center;
  justify-content: center;
  min-width: 0;
  min-height: 0;
  color: #5a5d61;
  b {
    font-weight: 400;
    line-height: 15px;
    ${(p) => p.$vertical && "transform: rotate(-90deg);"}
  }
  i {
    background: #55585c;
    width: ${(p) => (p.$vertical && p.$kind === "tick" ? 6 : p.$vertical ? 2 : 1)}px;
    height: ${(p) => (!p.$vertical && p.$kind === "tick" ? 6 : p.$vertical ? 1 : 2)}px;
  }
`;

const RulerCursor = styled.span`
  position: absolute;
  ${(p) =>
    p.$vertical
      ? css`
          left: 0;
          right: 0;
          top: 254px;
          border-top: 1px dashed #000;
        `
      : css`
          top: 0;
          bottom: 0;
          left: 428px;
          border-left: 1px dashed #000;
        `}
`;

const Sheet = styled.article`
  flex: none;
  width: 960px;
  height: 720px;
  padding: 229px 110px 0;
  text-align: center;
  background: #fff;
  box-shadow: 0 0 10px rgba(0, 0, 0, 0.6);
  h1 {
    margin: 0;
    font-size: 61px;
    font-weight: 400;
    line-height: 70px;
    color: #000;
  }
  p {
    margin: 42px 0 0;
    font-size: 45px;
    line-height: 54px;
    color: #8b8b8b;
  }
`;

const StageScroll = styled.div`
  display: flex;
  padding-top: 35px;
`;

const Notes = styled.div`
  display: flex;
  flex: none;
  height: 49px;
  border-top: 1px solid #85898e;
  box-shadow: inset 0 4px #eceef1, inset 0 5px #85898e;
  padding-top: 5px;
  textarea {
    flex: 1;
    padding: 5px 12px;
    border: 0;
    resize: none;
    overflow: hidden;
    outline: 0;
    font-size: 19px;
    line-height: 28px;
    color: #000;
    background: #fff;
  }
`;

const Status = styled.footer`
  display: flex;
  flex: none;
  align-items: center;
  height: 28px;
  border-top: 2px solid #8b8f94;
  color: #4a4d51;
  background: linear-gradient(#e3e5e9, #c9ccd1 60%, #bdc0c6);
`;

const StatusItem = styled.div`
  display: flex;
  align-items: center;
  gap: 17px;
  height: 100%;
  padding: 0 11px 0 9px;
  border-right: 1px solid #9b9ea3;
`;

const Language = styled.button``;

const StatusSpace = styled.div`
  flex: 1;
`;

const StatusDivider = styled.span`
  width: 1px;
  height: 24px;
  margin-right: 4px;
  background: #9b9ea3;
`;

const ViewButton = styled.button`
  display: flex;
  align-items: center;
  justify-content: center;
  width: 23px;
  height: 23px;
  border-radius: 3px;
  ${(p) =>
    p.$active &&
    css`
      border: 1px solid #c99a3b;
      background: linear-gradient(#fbd774, #ffe98a);
    `}
`;

const ZoomValue = styled.span`
  width: 42px;
  text-align: center;
`;

const RoundButton = styled.button`
  display: flex;
  flex: none;
  align-items: center;
  justify-content: center;
  width: 20px;
  height: 20px;
  border: 1px solid #777a7e;
  border-radius: 50%;
  background: linear-gradient(#fff, #e3e5e8);
`;

const ZoomSlider = styled.input`
  width: 125px;
  height: 18px;
  margin: 0;
  appearance: none;
  background: linear-gradient(#85898e, #85898e) center / 100% 1px no-repeat,
    linear-gradient(#9a9da2, #9a9da2) center / 1px 8px no-repeat;
  &::-webkit-slider-thumb {
    appearance: none;
    width: 11px;
    height: 16px;
    border: 1px solid #66696d;
    border-radius: 1px 1px 6px 6px;
    background: linear-gradient(#fff, #e6e8eb);
  }
`;

const FitButton = styled.button`
  margin: 0 4px 0 9px;
`;

export default App;
